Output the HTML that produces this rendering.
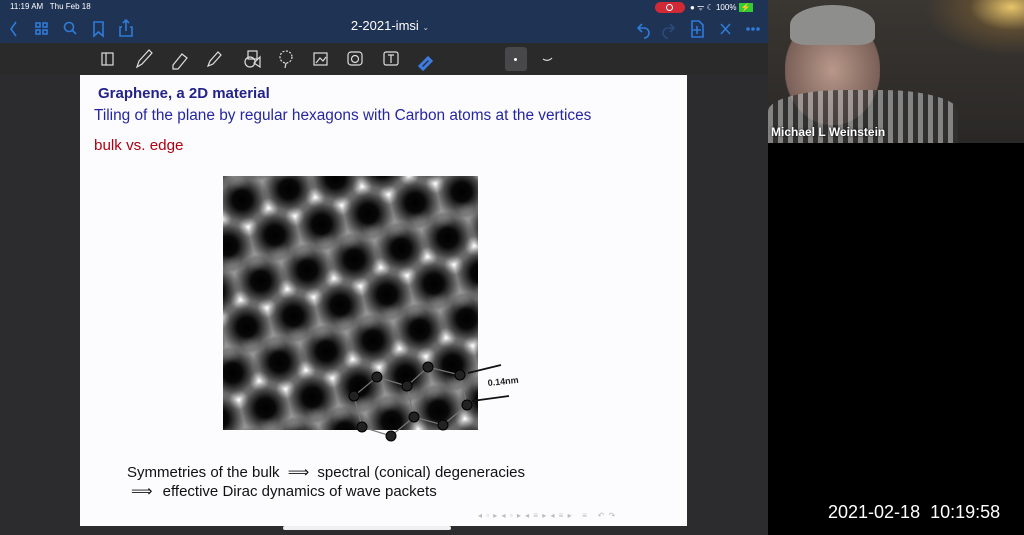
<!DOCTYPE html>
<html><head><style>
*{margin:0;padding:0;box-sizing:border-box}
body{width:1024px;height:535px;overflow:hidden;background:#2c2c2e;font-family:"Liberation Sans",sans-serif;position:relative}
.abs{position:absolute}
</style></head><body>
<div class="abs" style="left:0;top:0;width:768px;height:43px;background:#1f3355"></div>
<div class="abs" style="left:10px;top:2px;color:#fff;font-size:8px">11:19 AM&nbsp;&nbsp; Thu Feb 18</div>
<div class="abs" style="left:655px;top:2px;width:30px;height:11px;border-radius:6px;background:#d02a36"></div>
<div class="abs" style="left:666px;top:4px;width:7px;height:7px;border-radius:50%;border:1.5px solid #fff"></div>
<div class="abs" style="left:690px;top:2px;color:#fff;font-size:8px">● ᯤ ☾ 100% <span style="background:#3c3;padding:0 2px">⚡</span></div>
<div class="abs" style="left:0;top:18px;width:768px;text-align:center;color:#fff;font-size:13px;padding-left:12px">2-2021-imsi <span style="font-size:8px;color:#ccc">⌄</span></div>
<svg class="abs" style="left:0;top:14px" width="768" height="29" stroke="#2f7bd8" fill="none" stroke-width="1.6">
<path d="M16 8l-5 7 5 7"/>
<rect x="36" y="9" width="4" height="4"/><rect x="43" y="9" width="4" height="4"/><rect x="36" y="16" width="4" height="4"/><rect x="43" y="16" width="4" height="4"/>
<circle cx="69" cy="13" r="4.5"/><path d="M72 16l4 4"/>
<path d="M94 8h9v14l-4.5-4-4.5 4z"/>
<path d="M122 13h-2v9h12v-9h-2M126 17V6M123 9l3-3 3 3"/>
<path d="M642 10l-4 4 4 4M638 14h6a5 5 0 010 10"/>
<path d="M670 10l4 4-4 4M674 14h-6a5 5 0 000 10" stroke="#2a4a78"/>
<path d="M692 7h7l4 4v12h-11zM697 12v8M693 16h8"/>
<path d="M721 10l9 10M730 10l-9 10"/>
<circle cx="748" cy="15" r="1" fill="#2f7bd8"/><circle cx="753" cy="15" r="1" fill="#2f7bd8"/><circle cx="758" cy="15" r="1" fill="#2f7bd8"/>
</svg>
<div class="abs" style="left:0;top:43px;width:768px;height:32px;background:#2a2a2b"></div>
<div class="abs" style="left:505px;top:47px;width:22px;height:24px;border-radius:3px;background:#48484a"></div>
<div class="abs" style="left:514px;top:58px;width:3px;height:3px;border-radius:50%;background:#fff"></div>
<svg class="abs" style="left:0;top:43px" width="768" height="32" stroke="#ddd" fill="none" stroke-width="1.2">
<rect x="102" y="10" width="11" height="12"/><path d="M106 10v12"/>
<path d="M137 24l2-6 10-11 3 3-10 11z"/>
<path d="M173 22l9-11 5 4-9 11h-5z"/>
<path d="M208 23l2-5 8-9 3 3-8 9z"/>
<rect x="248" y="8" width="9" height="8"/><circle cx="250" cy="19" r="5"/><path d="M254 20l6-6v10z"/>
<circle cx="286" cy="14" r="6" stroke-dasharray="2 1.5"/><path d="M286 20l-1 5"/>
<rect x="314" y="10" width="13" height="12"/><path d="M316 20l4-5 3 3 3-4"/>
<rect x="348" y="9" width="14" height="13" rx="3"/><circle cx="355" cy="16" r="3.5"/>
<rect x="384" y="9" width="14" height="13" rx="2"/><path d="M388 12h6M391 12v8"/>
<path d="M420 23l8-8 3 3-8 8z" stroke="#3c7be0" stroke-width="3"/>
<path d="M543 16c3 2 6 2 9-1" />
</svg>
<div class="abs" style="left:80px;top:75px;width:607px;height:451px;background:#fcfcfe"></div>
<div class="abs" style="left:98px;top:85px;font-size:15px;font-weight:bold;color:#23238a">Graphene, a 2D material</div>
<div class="abs" style="left:94px;top:107px;font-size:15.4px;color:#2626a0">Tiling of the plane by regular hexagons with Carbon atoms at the vertices</div>
<div class="abs" style="left:94px;top:137px;font-size:15.2px;color:#b00010">bulk vs. edge</div>
<svg class="abs" style="left:0;top:0" width="768" height="535">
<defs>
<radialGradient id="h"><stop offset="0" stop-color="#000"/><stop offset=".35" stop-color="#080808"/><stop offset=".7" stop-color="#000" stop-opacity=".45"/><stop offset="1" stop-color="#000" stop-opacity="0"/></radialGradient>
<radialGradient id="w"><stop offset="0" stop-color="#fff"/><stop offset=".4" stop-color="#eee" stop-opacity=".7"/><stop offset="1" stop-color="#fff" stop-opacity="0"/></radialGradient>
<pattern id="p" patternUnits="userSpaceOnUse" width="48" height="83.14" patternTransform="translate(242,200) rotate(-13)">
<rect width="48" height="83.14" fill="#959595"/>
<g fill="url(#w)">
<circle cx="24" cy="13.86" r="10"/><circle cx="0" cy="27.7" r="10"/><circle cx="48" cy="27.7" r="10"/>
<circle cx="24" cy="55.4" r="10"/><circle cx="0" cy="69.3" r="10"/><circle cx="48" cy="69.3" r="10"/>
</g>
<g fill="url(#h)">
<circle cx="0" cy="0" r="27"/><circle cx="48" cy="0" r="27"/><circle cx="0" cy="83.14" r="27"/><circle cx="48" cy="83.14" r="27"/><circle cx="24" cy="41.57" r="27"/>
</g>
</pattern>
</defs>
<rect x="223" y="176" width="255" height="254" fill="url(#p)"/>
<g stroke="#777" stroke-width="1.2" fill="none">
<path d="M377 377L407 386L414 417L391 436L362 427L354 396Z"/>
<path d="M407 386L428 367L460 375L467 405L443 425L414 417"/>
</g>
<g fill="#222" stroke="#000">
<circle cx="377" cy="377" r="5"/><circle cx="428" cy="367" r="5"/><circle cx="460" cy="375" r="5"/><circle cx="407" cy="386" r="5"/><circle cx="354" cy="396" r="5"/><circle cx="467" cy="405" r="5"/><circle cx="414" cy="417" r="5"/><circle cx="362" cy="427" r="5"/><circle cx="443" cy="425" r="5"/><circle cx="391" cy="436" r="5"/>
</g>
<path d="M468 373L501 365M472 401L509 396" stroke="#111" stroke-width="1.8"/>
<text x="488" y="386" font-size="9" font-weight="bold" font-family="Liberation Sans" transform="rotate(-6 488 386)" fill="#222">0.14nm</text>
</svg>
<div class="abs" style="left:127px;top:463px;font-size:15px;color:#111">Symmetries of the bulk <span style="margin:0 4px">⟹</span> spectral (conical) degeneracies</div>
<div class="abs" style="left:131px;top:482px;font-size:15px;color:#111"><span style="margin-right:6px">⟹</span> effective Dirac dynamics of wave packets</div>
<div class="abs" style="left:478px;top:511px;font-size:8px;color:#bbb;letter-spacing:1px">◂ ▫ ▸ ◂ ▫ ▸ ◂ ≡ ▸ ◂ ≡ ▸ &nbsp; ≡ &nbsp; ↶ ↷</div>
<div class="abs" style="left:283px;top:526px;width:168px;height:4px;border-radius:2px;background:#f0f0f0"></div>
<div class="abs" style="left:768px;top:0;width:256px;height:143px;background:radial-gradient(ellipse at 95% 5%,#e8c46a 0,#5a4a32 12%,transparent 25%),linear-gradient(#3a3632,#2a2826)"></div>
<div class="abs" style="left:785px;top:15px;width:95px;height:110px;border-radius:45% 45% 40% 40%;background:radial-gradient(ellipse at 50% 50%,#b8988a,#7a6058 70%,transparent 72%)"></div>
<div class="abs" style="left:790px;top:5px;width:85px;height:40px;border-radius:50% 50% 20% 20%;background:#8e8e8c"></div>
<div class="abs" style="left:768px;top:90px;width:190px;height:53px;border-radius:40% 40% 0 0;background:repeating-linear-gradient(90deg,#aaa 0 5px,#333 5px 10px),#555;opacity:.7"></div>
<div class="abs" style="left:771px;top:125px;font-size:12px;font-weight:bold;color:#fff;text-shadow:0 0 2px #000">Michael L Weinstein</div>
<div class="abs" style="left:768px;top:143px;width:256px;height:392px;background:#000"></div>
<div class="abs" style="left:828px;top:502px;font-size:18px;color:#fff">2021-02-18&nbsp; 10:19:58</div>
</body></html>
